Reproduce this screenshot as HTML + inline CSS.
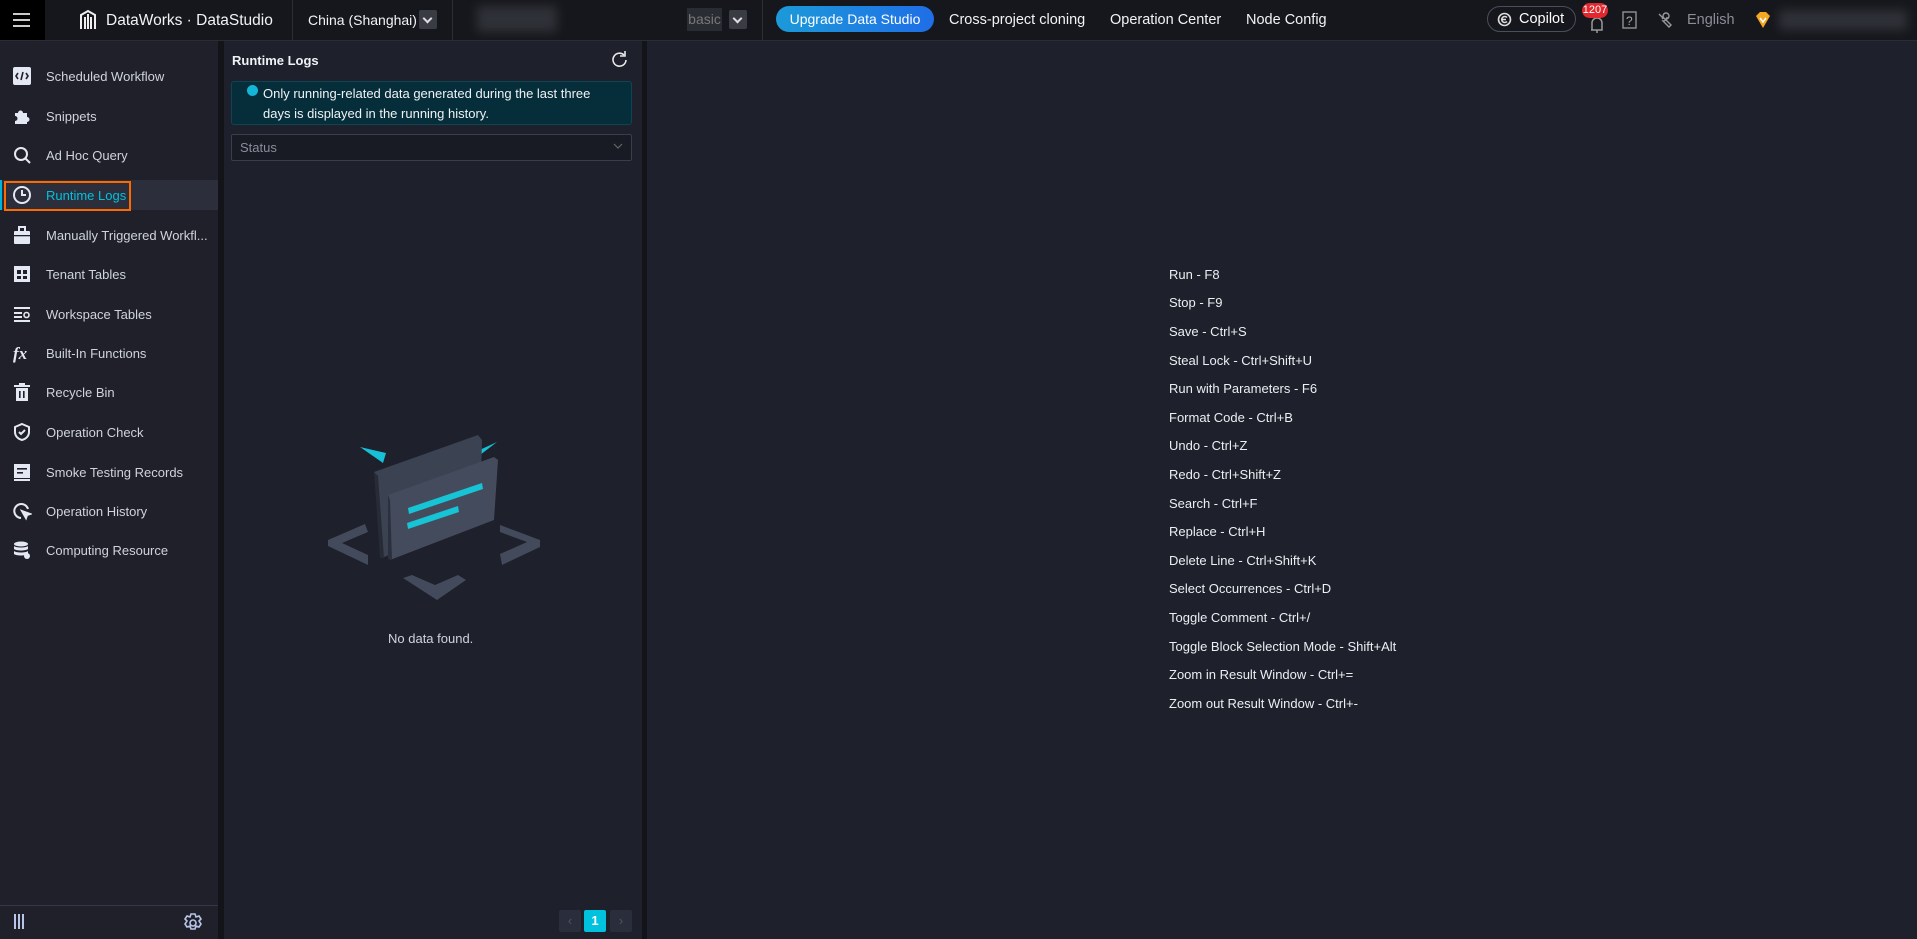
<!DOCTYPE html>
<html><head><meta charset="utf-8"><style>
*{margin:0;padding:0;box-sizing:border-box}
body{width:1917px;height:939px;background:#1e202b;font-family:"Liberation Sans",Arial,sans-serif;color:#d3d6de;position:relative;overflow:hidden;font-size:13px}
.a{position:absolute}
.top{left:0;top:0;width:1917px;height:41px;background:#16171c;border-bottom:1px solid #2a2c33}
.t{position:absolute;top:12px;font-size:14.5px;color:#f2f3f5;white-space:nowrap}
.vd{position:absolute;top:0;width:1px;height:41px;background:#2c2e35}
.dd{position:absolute;top:10px;width:18px;height:19px;background:#3a3c44;border-radius:2px}
.dd:after{content:"";position:absolute;left:5px;top:5px;width:5px;height:5px;border-right:2px solid #ddd;border-bottom:2px solid #ddd;transform:rotate(45deg)}
.side{left:0;top:41px;width:218px;height:898px;background:#1f2029}
.it{position:absolute;left:0;width:218px;height:30px}
.it span{position:absolute;left:46px;top:8px;font-size:13px;color:#d0d3dc;white-space:nowrap}
.it svg{position:absolute;left:12px;top:5px}
.sc{position:absolute;left:1169px;font-size:13px;color:#eceef2;white-space:nowrap}
</style></head><body>
<div class="a top">
 <div class="a" style="left:0;top:0;width:45px;height:40px;background:#000"></div>
 <svg class="a" style="left:13px;top:13px" width="18" height="14"><rect y="0" width="17" height="2" fill="#ccc"/><rect y="6" width="17" height="2" fill="#ccc"/><rect y="12" width="17" height="2" fill="#ccc"/></svg>
 <svg class="a" style="left:78px;top:9px" width="20" height="22" viewBox="0 0 20 22" fill="none" stroke="#eee" stroke-width="2"><path d="M3 20V6l7-4 7 4v14M7 20V8M10 20V5M13 20V8"/></svg>
 <div class="t" style="left:106px;font-size:15.5px">DataWorks · DataStudio</div>
 <div class="vd" style="left:292px"></div>
 <div class="t" style="left:308px;font-size:14px">China (Shanghai)</div>
 <div class="dd" style="left:419px"></div>
 <div class="vd" style="left:452px"></div>
 <div class="a" style="left:477px;top:6px;width:80px;height:26px;background:#3a3c44;filter:blur(5px);opacity:.7"></div>
 <div class="a" style="left:687px;top:8px;width:35px;height:23px;background:#2a2c33;color:#777;font-size:14px;line-height:23px;text-align:center">basic</div>
 <div class="dd" style="left:729px"></div>
 <div class="vd" style="left:762px"></div>
 <div class="a" style="left:776px;top:6px;width:158px;height:26px;border-radius:13px;background:linear-gradient(90deg,#1c9ad9,#1f6ee6);color:#fff;font-size:14px;line-height:26px;text-align:center">Upgrade Data Studio</div>
 <div class="t" style="left:949px">Cross-project cloning</div>
 <div class="t" style="left:1110px">Operation Center</div>
 <div class="t" style="left:1246px">Node Config</div>
 <div class="a" style="left:1487px;top:6px;width:89px;height:26px;border:1px solid #4a4e5a;border-radius:13px;color:#fff;font-size:14.5px;line-height:24px;padding-left:31px">Copilot</div>
 <svg class="a" style="left:1497px;top:12px" width="15" height="15" viewBox="0 0 15 15" fill="none" stroke="#ddd" stroke-width="1.6"><circle cx="7.5" cy="7.5" r="6"/><path d="M10 5.5a3 3 0 1 0 0 4M4 7.5h5"/></svg>
 <svg class="a" style="left:1589px;top:16px" width="16" height="18" viewBox="0 0 16 18" fill="none" stroke="#999" stroke-width="1.5"><path d="M3 14V7a5 5 0 0 1 10 0v7H2M8 14v3"/></svg>
 <div class="a" style="left:1582px;top:3px;width:26px;height:15px;background:#e0282e;border-radius:8px;color:#fff;font-size:11px;line-height:15px;text-align:center">1207</div>
 <svg class="a" style="left:1622px;top:11px" width="15" height="18"><rect x="1" y="1" width="13" height="16" fill="none" stroke="#999" stroke-width="1.3"/><text x="4" y="14" font-size="12" fill="#aaa" font-family="Liberation Sans">?</text></svg>
 <svg class="a" style="left:1656px;top:11px" width="18" height="18" viewBox="0 0 18 18" fill="none" stroke="#999" stroke-width="1.4"><path d="M3 3l4 4-1 1M11 6a4 4 0 0 1-4 4l6 6 2-2-6-6"/><circle cx="10" cy="5" r="3"/></svg>
 <div class="t" style="left:1687px;color:#8a8d96">English</div>
 <svg class="a" style="left:1754px;top:11px" width="18" height="18" viewBox="0 0 18 18"><path d="M2 5l4-4h6l4 4-7 12z" fill="#f5a623"/><path d="M6 7l3 4 3-4" stroke="#fff" stroke-width="1.5" fill="none"/></svg>
 <div class="a" style="left:1779px;top:10px;width:128px;height:20px;background:#3a3c44;filter:blur(5px);opacity:.7"></div>
</div>

<div class="a side">
 <div class="it" style="top:20px"><svg width="20" height="20" viewBox="0 0 20 20"><rect x="1" y="1" width="18" height="18" rx="2" fill="#e4e8f2"/><path d="M6 7l-2 3 2 3M14 7l2 3-2 3M11 6l-2 8" stroke="#1f2029" stroke-width="1.6" fill="none"/></svg><span>Scheduled Workflow</span></div>
 <div class="it" style="top:60px"><svg width="20" height="20" viewBox="0 0 20 20"><path d="M3 7h3a2.5 2.5 0 1 1 5 0h4v4a2.5 2.5 0 1 1 0 5v2H3v-3a2.5 2.5 0 1 0 0-5z" fill="#e4e8f2"/></svg><span>Snippets</span></div>
 <div class="it" style="top:99px"><svg width="20" height="20" viewBox="0 0 20 20" fill="none" stroke="#e4e8f2" stroke-width="2"><circle cx="9" cy="9" r="6"/><path d="M13 13l5 5"/></svg><span>Ad Hoc Query</span></div>
 <div class="a" style="left:0;top:139px;width:218px;height:30px;background:#2c2e3b"></div>
 <div class="a" style="left:0;top:139px;width:2px;height:30px;background:#00b4d8"></div>
 <div class="a" style="left:4px;top:140px;width:127px;height:30px;border:2px solid #ff6a00"></div>
 <div class="it" style="top:139px"><svg width="20" height="20" viewBox="0 0 20 20" fill="none" stroke="#e4e8f2" stroke-width="2"><circle cx="10" cy="10" r="8"/><path d="M10 5v5h4"/></svg><span style="color:#00c1de">Runtime Logs</span></div>
 <div class="it" style="top:179px"><svg width="20" height="20" viewBox="0 0 20 20"><rect x="2" y="6" width="16" height="13" rx="1" fill="#e4e8f2"/><rect x="7" y="2" width="6" height="5" fill="none" stroke="#e4e8f2" stroke-width="2"/><rect x="2" y="10" width="16" height="1.3" fill="#1f2029"/></svg><span>Manually Triggered Workfl...</span></div>
 <div class="it" style="top:218px"><svg width="20" height="20" viewBox="0 0 20 20"><rect x="2" y="2" width="16" height="16" fill="#e4e8f2"/><rect x="5" y="6" width="4" height="4" fill="#1f2029"/><rect x="11" y="6" width="4" height="4" fill="#1f2029"/><rect x="5" y="12" width="4" height="3" fill="#1f2029"/><rect x="11" y="12" width="4" height="3" fill="#1f2029"/></svg><span>Tenant Tables</span></div>
 <div class="it" style="top:258px"><svg width="20" height="20" viewBox="0 0 20 20" fill="#e4e8f2"><rect x="2" y="3" width="16" height="2"/><rect x="2" y="8" width="8" height="2"/><rect x="2" y="12" width="8" height="2"/><rect x="2" y="16" width="16" height="2"/><circle cx="14.5" cy="11" r="2.5" fill="none" stroke="#e4e8f2" stroke-width="1.6"/></svg><span>Workspace Tables</span></div>
 <div class="it" style="top:297px"><svg width="22" height="20"><text x="1" y="16" font-size="17" font-style="italic" font-weight="bold" fill="#e4e8f2" font-family="Liberation Serif">fx</text></svg><span>Built-In Functions</span></div>
 <div class="it" style="top:336px"><svg width="20" height="20" viewBox="0 0 20 20" fill="#e4e8f2"><rect x="2" y="3" width="16" height="2"/><rect x="7" y="1" width="6" height="2"/><path d="M4 6h12v13H4z"/><rect x="7" y="9" width="1.6" height="7" fill="#1f2029"/><rect x="11" y="9" width="1.6" height="7" fill="#1f2029"/></svg><span>Recycle Bin</span></div>
 <div class="it" style="top:376px"><svg width="20" height="20" viewBox="0 0 20 20" fill="none" stroke="#e4e8f2" stroke-width="2"><path d="M10 2l7 3v5c0 4-3 7-7 8-4-1-7-4-7-8V5z"/><path d="M7 10l2 2 4-4"/></svg><span>Operation Check</span></div>
 <div class="it" style="top:416px"><svg width="20" height="20" viewBox="0 0 20 20"><rect x="2" y="2" width="16" height="14" fill="#e4e8f2"/><rect x="5" y="6" width="10" height="1.6" fill="#1f2029"/><rect x="5" y="10" width="6" height="1.6" fill="#1f2029"/><rect x="2" y="17" width="16" height="2" fill="#e4e8f2"/></svg><span>Smoke Testing Records</span></div>
 <div class="it" style="top:455px"><svg width="20" height="20" viewBox="0 0 20 20" fill="none" stroke="#e4e8f2" stroke-width="2"><path d="M16 8a7 7 0 1 0-7 9"/><path d="M10 10l8 3-3 1-1 3z" fill="#e4e8f2"/></svg><span>Operation History</span></div>
 <div class="it" style="top:494px"><svg width="20" height="20" viewBox="0 0 20 20" fill="#e4e8f2"><ellipse cx="9" cy="4" rx="7" ry="2.5"/><path d="M2 6c2 2 12 2 14 0v3c-2 2-12 2-14 0zM2 11c2 2 12 2 14 0v3c-2 2-12 2-14 0z"/><circle cx="15" cy="16" r="3"/></svg><span>Computing Resource</span></div>
 <div class="a" style="left:0;top:864px;width:218px;height:1px;background:#33364a"></div>
 <svg class="a" style="left:14px;top:873px" width="12" height="16" fill="#b8c4e8"><rect x="0" width="2" height="15"/><rect x="4" width="2" height="15"/><rect x="8" width="2" height="15"/></svg>
 <svg class="a" style="left:183px;top:872px" width="20" height="20" viewBox="0 0 20 20" fill="none" stroke="#b8c4e8" stroke-width="1.6"><path d="M8 1h4l1 3 3-1 2 3-2 2 2 3-2 3-3-1-1 3H8l-1-3-3 1-2-3 2-3-2-2 2-3 3 1z"/><circle cx="10" cy="10" r="3"/></svg>
</div>
<div class="a" style="left:218px;top:41px;width:6px;height:898px;background:#131419"></div>
<div class="a" style="left:642px;top:41px;width:5px;height:898px;background:#131419"></div>

<div class="a" style="left:232px;top:53px;font-size:13px;font-weight:bold;color:#f0f2f5">Runtime Logs</div>
<svg class="a" style="left:611px;top:50px" width="18" height="19" viewBox="0 0 18 19" fill="none" stroke="#e8e8e8" stroke-width="1.6"><path d="M15 10a6.5 6.5 0 1 1-2-5"/><path d="M14 1v5h-5"/></svg>
<div class="a" style="left:231px;top:81px;width:401px;height:44px;background:#052d3a;border:1px solid #0e4555;border-radius:3px"></div>
<div class="a" style="left:247px;top:85px;width:11px;height:11px;border-radius:50%;background:#14b5d6"></div>
<div class="a" style="left:263px;top:84px;font-size:13px;color:#f0f2f5;line-height:20px;width:360px">Only running-related data generated during the last three<br>days is displayed in the running history.</div>
<div class="a" style="left:231px;top:134px;width:401px;height:27px;background:#181a24;border:1px solid #3a3d4a;border-radius:2px;color:#8a8e99;font-size:13px;line-height:25px;padding-left:8px">Status</div>
<svg class="a" style="left:613px;top:142px" width="10" height="8" fill="none" stroke="#666" stroke-width="1.2"><path d="M1 2l4 4 4-4"/></svg>

<svg class="a" style="left:320px;top:420px" width="230" height="190" viewBox="0 0 230 190">
 <polygon points="40,27 66,33 63,43" fill="#17c0d6"/>
 <polygon points="153,33 177,22 160,35" fill="#17c0d6"/>
 <polygon points="54,52 158,15 162,20 160,95 62,138" fill="#3b4252"/>
 <polygon points="54,52 58,56 64,138 60,138" fill="#262b36"/>
 <polygon points="68,75 174,37 178,40 174,100 70,140" fill="#444b5d"/>
 <polygon points="68,75 70,80 72,140 68,139" fill="#2b303c"/>
 <polygon points="88,88 162,63 163,69 89,94" fill="#17c4d6"/>
 <polygon points="87,103 138,86 139,92 88,109" fill="#17c4d6"/>
 <polygon points="8,120 45,104 48,112 22,123 48,135 48,145 8,126" fill="#434a5b"/>
 <polygon points="180,105 220,120 220,127 182,145 180,134 207,122 180,112" fill="#434a5b"/>
 <polygon points="83,158 92,155 115,165 138,155 146,160 117,180" fill="#434a5b"/>
</svg>
<div class="a" style="left:388px;top:631px;font-size:13px;color:#d0d3dc">No data found.</div>

<div class="a" style="left:559px;top:910px;width:22px;height:22px;background:#2a2d3b;border-radius:2px;color:#555;text-align:center;line-height:22px">‹</div>
<div class="a" style="left:584px;top:910px;width:22px;height:22px;background:#00c1de;border-radius:2px;color:#fff;text-align:center;line-height:22px;font-weight:bold">1</div>
<div class="a" style="left:610px;top:910px;width:22px;height:22px;background:#2a2d3b;border-radius:2px;color:#555;text-align:center;line-height:22px">›</div>

<div class="sc" style="top:267px">Run - F8</div>
<div class="sc" style="top:295px">Stop - F9</div>
<div class="sc" style="top:324px">Save - Ctrl+S</div>
<div class="sc" style="top:353px">Steal Lock - Ctrl+Shift+U</div>
<div class="sc" style="top:381px">Run with Parameters - F6</div>
<div class="sc" style="top:410px">Format Code - Ctrl+B</div>
<div class="sc" style="top:438px">Undo - Ctrl+Z</div>
<div class="sc" style="top:467px">Redo - Ctrl+Shift+Z</div>
<div class="sc" style="top:496px">Search - Ctrl+F</div>
<div class="sc" style="top:524px">Replace - Ctrl+H</div>
<div class="sc" style="top:553px">Delete Line - Ctrl+Shift+K</div>
<div class="sc" style="top:581px">Select Occurrences - Ctrl+D</div>
<div class="sc" style="top:610px">Toggle Comment - Ctrl+/</div>
<div class="sc" style="top:639px">Toggle Block Selection Mode - Shift+Alt</div>
<div class="sc" style="top:667px">Zoom in Result Window - Ctrl+=</div>
<div class="sc" style="top:696px">Zoom out Result Window - Ctrl+-</div>
</body></html>
